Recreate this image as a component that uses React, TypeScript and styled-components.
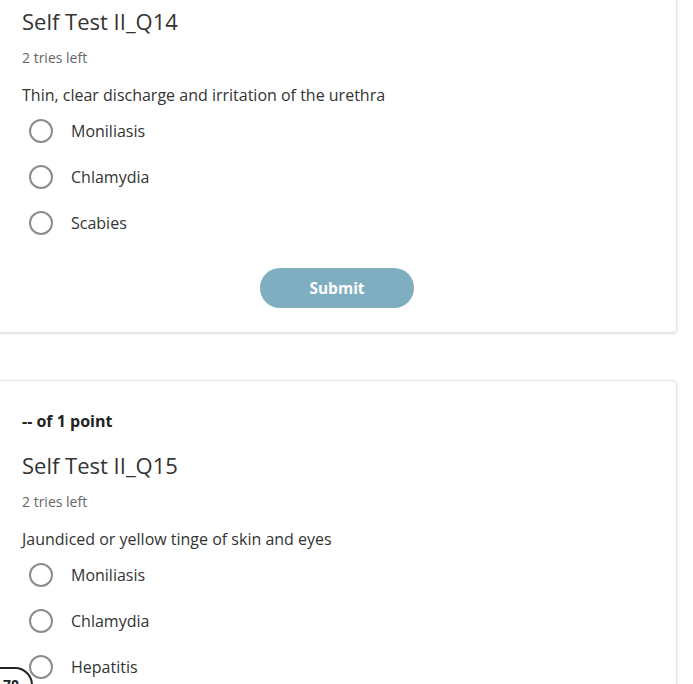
import React from "react";
import styled, { createGlobalStyle } from "styled-components";

type Question = {
  id: string;
  title: string;
  prompt: string;
  options: string[];
};

const GlobalStyle = createGlobalStyle`
  html, body {
    margin: 0;
    padding: 0;
    background: #fff;
    overflow: hidden;
  }
  body {
    font-family: "Open Sans", "Liberation Sans", sans-serif;
    color: #333;
  }
`;

const Page = styled.div`
  display: flex;
  flex-direction: column;
  gap: 47px;
  margin-top: -64px;
  padding-right: 16px;
`;

const Card = styled.section`
  margin-left: -10px;
  padding: 28px 24px 24px 31px;
  background: #fff;
  border: 1px solid #e3e3e3;
  border-radius: 4px;
  box-shadow: 0 1px 3px rgba(0, 0, 0, 0.12);
`;

const Points = styled.div`
  font-size: 16px;
  line-height: 24px;
  font-weight: 700;
  color: #222;
`;

const Title = styled.h2`
  margin: 16px 0 0;
  font-size: 22px;
  line-height: 32px;
  font-weight: 400;
  color: #333;
`;

const Tries = styled.div`
  margin-top: 11px;
  font-size: 14px;
  line-height: 20px;
  color: #666;
`;

const Prompt = styled.p`
  margin: 15px 0 0;
  font-size: 16px;
  line-height: 24px;
  color: #333;
`;

const Options = styled.div`
  margin-top: 1px;
  display: flex;
  flex-direction: column;
`;

const Option = styled.label`
  display: flex;
  align-items: center;
  gap: 18px;
  height: 46px;
  padding-left: 7px;
  font-size: 16px;
  color: #333;
  cursor: pointer;
`;

const Radio = styled.span`
  box-sizing: border-box;
  width: 24px;
  height: 24px;
  border-radius: 50%;
  border: 2px solid #8c8c8c;
  flex: none;
`;

const Actions = styled.div`
  display: flex;
  justify-content: center;
  margin-top: 22px;
`;

const SubmitButton = styled.button`
  width: 154px;
  height: 40px;
  border: none;
  border-radius: 20px;
  background: #80aec1;
  color: #fff;
  font-family: "Open Sans", "Liberation Sans", sans-serif;
  font-size: 15.5px;
  font-weight: 700;
`;

const Badge = styled.div`
  position: fixed;
  left: -22px;
  top: 667px;
  width: 55px;
  height: 40px;
  box-sizing: border-box;
  border: 2px solid #222;
  border-radius: 18px;
  background: #fff;
  font-size: 14px;
  font-weight: 700;
  color: #222;
  text-align: right;
  padding: 6px 12px 0 0;
`;

const questions: Question[] = [
  {
    id: "q14",
    title: "Self Test II_Q14",
    prompt: "Thin, clear discharge and irritation of the urethra",
    options: ["Moniliasis", "Chlamydia", "Scabies"],
  },
  {
    id: "q15",
    title: "Self Test II_Q15",
    prompt: "Jaundiced or yellow tinge of skin and eyes",
    options: ["Moniliasis", "Chlamydia", "Hepatitis", "Syphilis"],
  },
];

const App: React.FC = () => {
  return (
    <>
      <GlobalStyle />
      <Page>
        {questions.map((q) => (
          <Card key={q.id}>
            <Points>-- of 1 point</Points>
            <Title>{q.title}</Title>
            <Tries>2 tries left</Tries>
            <Prompt>{q.prompt}</Prompt>
            <Options>
              {q.options.map((opt) => (
                <Option key={opt}>
                  <Radio />
                  {opt}
                </Option>
              ))}
            </Options>
            <Actions>
              <SubmitButton type="button">Submit</SubmitButton>
            </Actions>
          </Card>
        ))}
      </Page>
      <Badge>70</Badge>
    </>
  );
};

export default App;
